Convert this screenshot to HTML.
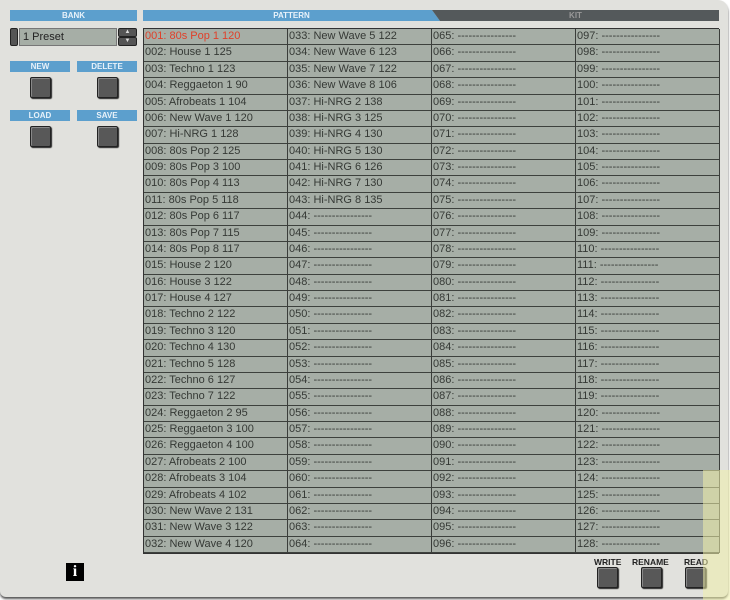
<!DOCTYPE html>
<html><head><meta charset="utf-8"><style>
*{margin:0;padding:0;box-sizing:border-box}
body{width:730px;height:600px;background:#fff;font-family:"Liberation Sans",sans-serif;position:relative;overflow:hidden}
#panel{position:absolute;left:0;top:0;width:728px;height:597px;background:#e1e1dd;border-radius:0 10px 6px 6px;box-shadow:0 2px 2px #555}
.hdr{position:absolute;height:11px;background:#5c9fcd;color:#e8f2fa;font-size:8px;font-weight:bold;text-align:center;line-height:11px}
.btn{position:absolute;width:21px;height:21px;background:#585858;border:1px solid #222;box-shadow:1px 1px 1px #222,inset 1px 1px 0 #888;border-radius:2px}
#grid{position:absolute;left:143px;top:28px;width:576px;height:526px;background:#3a3e3a;display:grid;grid-template-columns:144px 144px 144px 144px;grid-auto-flow:column;grid-template-rows:repeat(32,1fr);gap:0;border:1px solid #333}
#grid div{background:#a6aea6;border-right:1px solid #3a3d3a;border-bottom:1.5px solid #3d413d;font-size:11px;color:#353935;line-height:15px;padding-left:1px;white-space:nowrap;overflow:hidden}
.lbl{position:absolute;font-size:8.5px;font-weight:bold;color:#222}
</style></head><body>
<div id="panel">
<div class="hdr" style="left:10px;top:10px;width:127px">BANK</div>
<div class="hdr" style="left:143px;top:10px;width:297px;clip-path:polygon(0 0,289px 0,297px 100%,0 100%)">PATTERN</div>
<div class="hdr" style="left:432px;top:10px;width:287px;background:#54595b;color:#999;clip-path:polygon(0 0,100% 0,100% 100%,8px 100%)">KIT</div>
<div style="position:absolute;left:10px;top:28px;width:8px;height:18px;background:#555;border:1px solid #222;border-radius:2px"></div>
<div style="position:absolute;left:19px;top:28px;width:98px;height:18px;background:#a6aea6;border:1px solid #777;font-size:11px;line-height:16px;color:#222;padding-left:3px">1 Preset</div>
<div style="position:absolute;left:118px;top:28px;width:19px;height:9px;background:#555;border:1px solid #222;border-radius:2px;color:#ddd;font-size:6px;text-align:center;line-height:7px">▲</div>
<div style="position:absolute;left:118px;top:37px;width:19px;height:9px;background:#555;border:1px solid #222;border-radius:2px;color:#ddd;font-size:6px;text-align:center;line-height:7px">▼</div>
<div class="hdr" style="left:10px;top:61px;width:60px">NEW</div>
<div class="hdr" style="left:77px;top:61px;width:60px">DELETE</div>
<div class="btn" style="left:30px;top:77px"></div>
<div class="btn" style="left:97px;top:77px"></div>
<div class="hdr" style="left:10px;top:110px;width:60px">LOAD</div>
<div class="hdr" style="left:77px;top:110px;width:60px">SAVE</div>
<div class="btn" style="left:30px;top:126px"></div>
<div class="btn" style="left:97px;top:126px"></div>
<div style="position:absolute;left:66px;top:563px;width:18px;height:18px;background:#000;color:#fff;font-family:'Liberation Serif',serif;font-weight:bold;font-size:16px;text-align:center;line-height:18px">i</div>
<div class="lbl" style="left:594px;top:557px">WRITE</div>
<div class="lbl" style="left:632px;top:557px">RENAME</div>
<div class="lbl" style="left:684px;top:557px">READ</div>
<div class="btn" style="left:597px;top:567px"></div>
<div class="btn" style="left:641px;top:567px"></div>
<div class="btn" style="left:685px;top:567px"></div>
<div id="grid">
<div style="color:#e0402a">001: 80s Pop 1 120</div><div>002: House 1 125</div><div>003: Techno 1 123</div><div>004: Reggaeton 1 90</div><div>005: Afrobeats 1 104</div><div>006: New Wave 1 120</div><div>007: Hi-NRG 1 128</div><div>008: 80s Pop 2 125</div><div>009: 80s Pop 3 100</div><div>010: 80s Pop 4 113</div><div>011: 80s Pop 5 118</div><div>012: 80s Pop 6 117</div><div>013: 80s Pop 7 115</div><div>014: 80s Pop 8 117</div><div>015: House 2 120</div><div>016: House 3 122</div><div>017: House 4 127</div><div>018: Techno 2 122</div><div>019: Techno 3 120</div><div>020: Techno 4 130</div><div>021: Techno 5 128</div><div>022: Techno 6 127</div><div>023: Techno 7 122</div><div>024: Reggaeton 2 95</div><div>025: Reggaeton 3 100</div><div>026: Reggaeton 4 100</div><div>027: Afrobeats 2 100</div><div>028: Afrobeats 3 104</div><div>029: Afrobeats 4 102</div><div>030: New Wave 2 131</div><div>031: New Wave 3 122</div><div>032: New Wave 4 120</div>
<div>033: New Wave 5 122</div><div>034: New Wave 6 123</div><div>035: New Wave 7 122</div><div>036: New Wave 8 106</div><div>037: Hi-NRG 2 138</div><div>038: Hi-NRG 3 125</div><div>039: Hi-NRG 4 130</div><div>040: Hi-NRG 5 130</div><div>041: Hi-NRG 6 126</div><div>042: Hi-NRG 7 130</div><div>043: Hi-NRG 8 135</div><div>044: ----------------</div><div>045: ----------------</div><div>046: ----------------</div><div>047: ----------------</div><div>048: ----------------</div><div>049: ----------------</div><div>050: ----------------</div><div>051: ----------------</div><div>052: ----------------</div><div>053: ----------------</div><div>054: ----------------</div><div>055: ----------------</div><div>056: ----------------</div><div>057: ----------------</div><div>058: ----------------</div><div>059: ----------------</div><div>060: ----------------</div><div>061: ----------------</div><div>062: ----------------</div><div>063: ----------------</div><div>064: ----------------</div>
<div>065: ----------------</div><div>066: ----------------</div><div>067: ----------------</div><div>068: ----------------</div><div>069: ----------------</div><div>070: ----------------</div><div>071: ----------------</div><div>072: ----------------</div><div>073: ----------------</div><div>074: ----------------</div><div>075: ----------------</div><div>076: ----------------</div><div>077: ----------------</div><div>078: ----------------</div><div>079: ----------------</div><div>080: ----------------</div><div>081: ----------------</div><div>082: ----------------</div><div>083: ----------------</div><div>084: ----------------</div><div>085: ----------------</div><div>086: ----------------</div><div>087: ----------------</div><div>088: ----------------</div><div>089: ----------------</div><div>090: ----------------</div><div>091: ----------------</div><div>092: ----------------</div><div>093: ----------------</div><div>094: ----------------</div><div>095: ----------------</div><div>096: ----------------</div>
<div>097: ----------------</div><div>098: ----------------</div><div>099: ----------------</div><div>100: ----------------</div><div>101: ----------------</div><div>102: ----------------</div><div>103: ----------------</div><div>104: ----------------</div><div>105: ----------------</div><div>106: ----------------</div><div>107: ----------------</div><div>108: ----------------</div><div>109: ----------------</div><div>110: ----------------</div><div>111: ----------------</div><div>112: ----------------</div><div>113: ----------------</div><div>114: ----------------</div><div>115: ----------------</div><div>116: ----------------</div><div>117: ----------------</div><div>118: ----------------</div><div>119: ----------------</div><div>120: ----------------</div><div>121: ----------------</div><div>122: ----------------</div><div>123: ----------------</div><div>124: ----------------</div><div>125: ----------------</div><div>126: ----------------</div><div>127: ----------------</div><div>128: ----------------</div>
</div>
</div>
<div style="position:absolute;left:703px;top:470px;width:27px;height:130px;background:rgba(240,240,170,0.55)"></div>
</body></html>
